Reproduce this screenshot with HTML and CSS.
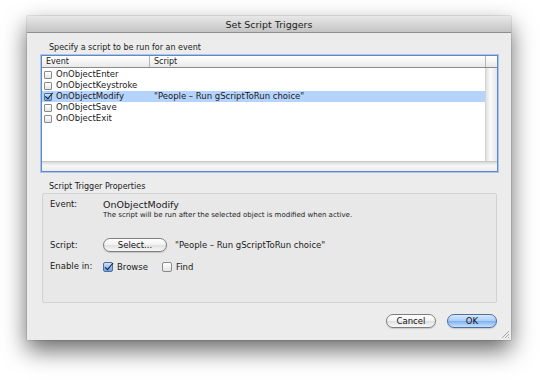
FILE: index.html
```html
<!DOCTYPE html>
<html lang="en">
<head>
    <meta charset="UTF-8">
    <title>Set Script Triggers</title>
    <link rel="stylesheet" href="styles.css">
</head>
<body>
    <div class="window">
        <div class="titlebar">Set Script Triggers</div>
        <div class="content">
            <div class="caption">Specify a script to be run for an event</div>
            <div class="listbox">
                <div class="list-head">
                    <div class="col-event">Event</div>
                    <div class="col-script">Script</div>
                    <div class="corner"></div>
                </div>
                <div class="list-body">
                    <div class="rows">
                        <div class="row"><div class="col-event"><span class="check"></span>OnObjectEnter</div><div class="col-script"></div></div>
                        <div class="row"><div class="col-event"><span class="check"></span>OnObjectKeystroke</div><div class="col-script"></div></div>
                        <div class="row selected"><div class="col-event"><span class="check checked"></span>OnObjectModify</div><div class="col-script">"People – Run gScriptToRun choice"</div></div>
                        <div class="row"><div class="col-event"><span class="check"></span>OnObjectSave</div><div class="col-script"></div></div>
                        <div class="row"><div class="col-event"><span class="check"></span>OnObjectExit</div><div class="col-script"></div></div>
                    </div>
                    <div class="vscroll"></div>
                </div>
                <div class="hscroll"></div>
            </div>

            <div class="caption group-caption">Script Trigger Properties</div>
            <div class="group">
                <div class="prop">
                    <div class="prop-label">Event:</div>
                    <div>
                        <div class="event-name">OnObjectModify</div>
                        <div class="event-desc">The script will be run after the selected object is modified when active.</div>
                    </div>
                </div>
                <div class="prop prop-script">
                    <div class="prop-label">Script:</div>
                    <button class="btn btn-select">Select...</button>
                    <div class="script-name">"People – Run gScriptToRun choice"</div>
                </div>
                <div class="prop prop-enable">
                    <div class="prop-label">Enable in:</div>
                    <label class="opt"><span class="check big checked"></span>Browse</label>
                    <label class="opt"><span class="check big"></span>Find</label>
                </div>
            </div>

            <div class="buttons">
                <button class="btn">Cancel</button>
                <button class="btn btn-default">OK</button>
            </div>
        </div>
        <svg class="grip" width="10" height="10" viewBox="0 0 10 10">
            <path d="M9 2 L2 9 M9 5 L5 9 M9 8 L8 9" stroke="#a8a8a8" stroke-width="1"/>
        </svg>
    </div>
</body>
</html>
```

FILE: styles.css
```css
html {
    height: 100%;
    background-color: #fff;
}
body {
    margin: 0;
    min-height: 364px;
    padding: 16px 0 0 27px;
    background-color: #fff;
    font-family: "DejaVu Sans", "Liberation Sans", sans-serif;
    color: #1a1a1a;
}
.window {
    position: relative;
    width: 484px;
    height: 324px;
    background-color: #ececec;
    box-shadow: 0 10px 22px rgba(0, 0, 0, 0.6), 0 0 1px rgba(0, 0, 0, 0.5);
    display: flex;
    flex-direction: column;
}
.titlebar {
    height: 16px;
    line-height: 17px;
    text-align: center;
    font-size: 9.5px;
    color: #222;
    background: linear-gradient(#e8e8e8, #c4c4c4);
    border-bottom: 1px solid #8e8e8e;
}
.content {
    padding: 9px 13px 0 14px;
    display: flex;
    flex-direction: column;
}
.caption {
    font-size: 8px;
    height: 12px;
    line-height: 12px;
    padding-left: 8px;
}

/* list box */
.listbox {
    margin-top: 1px;
    height: 115px;
    border: 1px solid #5d88c9;
    box-shadow: 0 0 0 1px #aac4ea;
    background-color: #fff;
    display: flex;
    flex-direction: column;
}
.list-head {
    display: flex;
    height: 11px;
    line-height: 11px;
    font-size: 8px;
    background: linear-gradient(#fff, #e9e9e9);
    border-bottom: 1px solid #8a8a8a;
}
.list-head .col-event {
    border-right: 1px solid #b5b5b5;
    padding-left: 4px;
}
.list-head .col-script {
    padding-left: 4px;
    border-right: 1px solid #b5b5b5;
}
.col-event {
    width: 108px;
    flex: none;
    box-sizing: border-box;
}
.col-script {
    flex: 1;
    box-sizing: border-box;
}
.corner {
    width: 11px;
    flex: none;
}
.list-body {
    flex: 1;
    display: flex;
}
.rows {
    flex: 1;
    padding-top: 1px;
}
.row {
    display: flex;
    height: 11px;
    line-height: 11px;
    font-size: 8.5px;
}
.row .col-event {
    display: flex;
    align-items: center;
    padding-left: 2px;
}
.row .col-script {
    padding-left: 4px;
}
.row.selected {
    background-color: #b5d4fd;
}
.vscroll {
    width: 11px;
    flex: none;
    background: linear-gradient(90deg, #e0e0e0, #fbfbfb 40%, #e6e6e6);
    border-left: 1px solid #d4d4d4;
}
.hscroll {
    height: 9px;
    background: linear-gradient(#d9d9d9, #f7f7f7 40%, #ececec);
    border-top: 1px solid #c8c8c8;
}

/* checkboxes */
.check {
    width: 8px;
    height: 8px;
    margin-right: 4px;
    flex: none;
    box-sizing: border-box;
    border: 1px solid #8a8a8a;
    border-radius: 1px;
    background: linear-gradient(#fff, #e4e4e4);
    position: relative;
}
.check.big {
    width: 10px;
    height: 10px;
    margin-right: 4px;
    border-radius: 2px;
}
.check.checked {
    background: linear-gradient(#cfe2fb, #6f9fe0);
    border-color: #4a6fa8;
}
.check.checked::after {
    content: "";
    position: absolute;
    left: 2px;
    top: -3px;
    width: 3px;
    height: 7px;
    border: solid #1a1a1a;
    border-width: 0 1.5px 1.5px 0;
    transform: rotate(40deg);
}
.check.big.checked::after {
    left: 3px;
    top: -2px;
    width: 3px;
    height: 8px;
}

/* properties group */
.group-caption {
    margin-top: 9px;
}
.group {
    height: 110px;
    box-sizing: border-box;
    border: 1px solid #d2d2d2;
    border-radius: 2px;
    background-color: #e8e8e8;
    margin: 0 1px 0 1px;
    padding: 5px 0 0 7px;
    font-size: 8.5px;
}
.prop {
    display: flex;
    align-items: flex-start;
}
.prop-label {
    width: 53px;
    flex: none;
}
.event-name {
    font-size: 9.5px;
    line-height: 11px;
}
.prop > .prop-label {
    line-height: 11px;
}
.event-desc {
    font-size: 7px;
    line-height: 10px;
}
.prop-script {
    margin-top: 18px;
    align-items: center;
}
.script-name {
    margin-left: 8px;
}
.prop-enable {
    margin-top: 9px;
    align-items: center;
}
.opt {
    display: flex;
    align-items: center;
    margin-right: 14px;
}

/* buttons */
.btn {
    font-family: inherit;
    font-size: 8.5px;
    color: #111;
    height: 14px;
    padding: 0;
    border: 1px solid #7e7e7e;
    border-radius: 7px;
    background: linear-gradient(#ffffff, #f2f2f2 50%, #e0e0e0 51%, #f8f8f8);
    box-shadow: 0 1px 1px rgba(0, 0, 0, 0.15);
}
.btn-select {
    width: 64px;
}
.buttons {
    display: flex;
    justify-content: flex-end;
    gap: 11px;
    margin-top: 11px;
    padding-right: 1px;
}
.buttons .btn {
    width: 50px;
}
.btn-default {
    border-color: #4d6fa5;
    background: linear-gradient(#d7e8fc, #a9cbf5 50%, #7fb0ee 51%, #c6e2fd);
}
.grip {
    position: absolute;
    right: 1px;
    bottom: 1px;
}
```
